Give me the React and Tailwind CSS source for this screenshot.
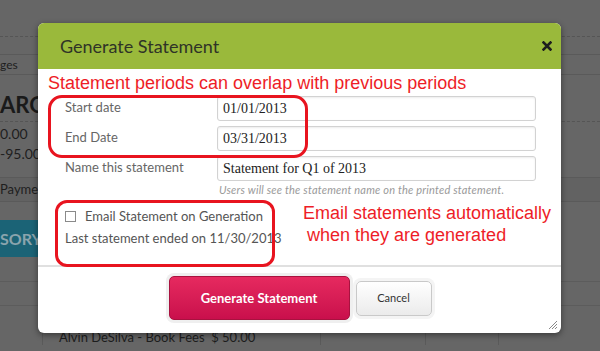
import React from "react";

const sans = { fontFamily: "Lato, 'Open Sans', sans-serif" };

const Field = ({ label, value }) => (
  <div className="flex h-[25px] items-center">
    <div className="w-[179px] pl-[27px] pb-[2px] text-[13px] text-[#666]">{label}</div>
    <div className="flex h-[25px] w-[319px] items-center rounded-[3px] border border-[#d2d2d2] bg-white pl-[5px] font-['Liberation_Serif',serif] text-[14px] text-[#222] shadow-[inset_0_1px_2px_rgba(0,0,0,0.08)]">
      {value}
    </div>
  </div>
);

const Background = () => (
  <div className="flex h-[351px] w-[600px] flex-col bg-[#666]" style={sans}>
    <div className="h-[37px] border-b border-dashed border-[#555]" />
    <div className="h-[18px] border-b border-[#5a5a5a]" />
    <div className="flex h-[20px] items-center border-b border-[#5a5a5a] text-[12px] text-[#1e1e1e]">ges</div>
    <div className="flex h-[47px] items-center pt-[12px] text-[22px] font-bold text-[#1a1a1a] border-b border-dashed border-[#555]">
      ARGES
    </div>
    <div className="flex h-[22px] items-end text-[14px] text-[#1e1e1e]">0.00</div>
    <div className="flex h-[18px] items-center text-[14px] text-[#1e1e1e]">-95.00</div>
    <div className="mt-[15px] flex h-[25px] items-center border-y border-[#5a5a5a] bg-[#626262] text-[13px] text-[#1e1e1e]">Paymen</div>
    <div className="mt-[18px] flex h-[37px] w-[38px] items-center bg-[#1b6376] text-[16px] font-bold text-[#8aa4ad]">
      SORY
    </div>
    <div className="h-[25px] border-b border-[#5c5c5c]" />
    <div className="h-[24px] border-b border-[#5c5c5c]" />
    <div className="h-[21px]" />
    <div className="flex h-[18px] text-[13px] text-[#1e1e1e]">
      <div className="w-[43px] border-r border-[#5a5a5a]" />
      <div className="w-[278px] border-r border-[#5a5a5a] pl-[16px] pt-[1px]">Alvin DeSilva - Book Fees&nbsp; $ 50.00</div>
      <div className="w-[105px] border-r border-[#5a5a5a]" />
      <div className="w-[73px] border-r border-[#5a5a5a]" />
    </div>
  </div>
);

export default function App() {
  return (
    <div className="relative h-[351px] w-[600px] overflow-hidden">
      <Background />

      <div
        className="absolute left-[38px] top-[23px] flex h-[310px] w-[523px] flex-col overflow-hidden rounded-[6px] bg-white shadow-[0_2px_6px_rgba(0,0,0,0.45)]"
        style={sans}
      >
        <div className="flex h-[46px] shrink-0 items-center justify-between bg-[#9ab93b] pl-[22px] pr-[9px]">
          <span className="text-[18px] text-[#2f3327]">Generate Statement</span>
          <svg width="10" height="10" viewBox="0 0 10 10" className="mb-[1px]">
            <path d="M1.5 1.5 L8.5 8.5 M8.5 1.5 L1.5 8.5" stroke="#1e1e1e" strokeWidth="2.6" strokeLinecap="square" />
          </svg>
        </div>

        <div className="flex h-[27px] items-center pl-[10px] pt-[2px] font-['Liberation_Sans',Arial,sans-serif] text-[18px] text-[#ee1d27]">
          Statement periods can overlap with previous periods
        </div>

        <div className="flex flex-col gap-[5px]">
          <Field label="Start date" value="01/01/2013" />
          <Field label="End Date" value="03/31/2013" />
          <Field label="Name this statement" value="Statement for Q1 of 2013" />
        </div>
        <div className="pl-[181px] pt-[1px] text-[11px] italic tracking-[0.2px] text-[#9a9a9a]">
          Users will see the statement name on the printed statement.
        </div>

        <div className="flex items-center gap-[9px] pl-[27px] pt-[8px] text-[13px] text-[#555]">
          <span className="h-[11px] w-[11px] border border-[#8a8a8a] bg-white" />
          <span>Email Statement on Generation</span>
        </div>
        <div className="pl-[27px] pt-[3px] text-[13px] text-[#555]">Last statement ended on 11/30/2013</div>

        <div className="mt-[16px] h-[2px] bg-[#e0e0e0]" />

        <div className="flex flex-1 items-center justify-center gap-[6px] pl-[1px] pb-[3px]">
          <button className="h-[44px] w-[181px] rounded-[5px] border border-[#a8123f] bg-gradient-to-b from-[#e6295f] to-[#c90f4c] text-[13px] font-bold text-white shadow-[0_0_0_3px_#efefef]">
            Generate Statement
          </button>
          <button className="h-[35px] w-[76px] rounded-[5px] border border-[#c9c9c9] bg-gradient-to-b from-[#ffffff] to-[#ebebeb] text-[11px] text-[#333] shadow-[0_0_0_3px_#f4f4f4]">
            Cancel
          </button>
        </div>

        <svg width="10" height="10" viewBox="0 0 10 10" className="absolute bottom-[3px] right-[3px]">
          <path d="M9 1 L1 9 M9 4 L4 9 M9 7 L7 9" stroke="#8a8a8a" strokeWidth="1" />
        </svg>

        <div className="pointer-events-none absolute left-[10px] top-[72px] h-[63px] w-[260px] rounded-[14px] border-[3px] border-[#e8141f]" />
        <div className="pointer-events-none absolute left-[17px] top-[177px] h-[67px] w-[220px] rounded-[12px] border-[3px] border-[#e8141f]" />
        <div className="pointer-events-none absolute left-[265px] top-[179px] font-['Liberation_Sans',Arial,sans-serif] text-[18px] leading-[22px] text-[#ee1d27]">
          <div>Email statements automatically</div>
          <div className="pl-[4px]">when they are generated</div>
        </div>
      </div>
    </div>
  );
}
